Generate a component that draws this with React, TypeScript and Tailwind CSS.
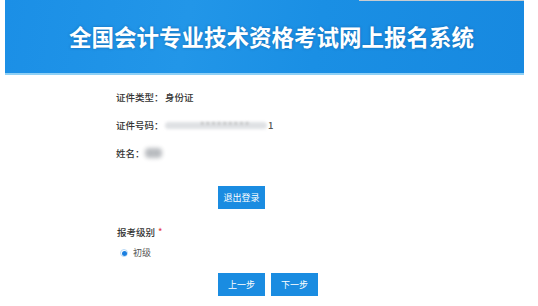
export default function App() {
  return (
    <div
      className="relative w-[538px] h-[306px] bg-white overflow-hidden"
      style={{ fontFamily: '"Noto Sans CJK SC", "Noto Sans", sans-serif' }}
    >
      {/* top strip */}
      <div className="absolute top-0 left-[359px] w-[165px] h-px bg-[#c8ccd0]" />

      {/* header */}
      <div className="ml-[5px] w-[519px] h-[75px] border-b-2 border-[#8fd0f5] bg-[linear-gradient(100deg,#1b8fe6_0%,#2296e8_35%,#1a8fe4_60%,#1789e0_100%)] flex items-center justify-center">
        <h1 className="pl-[14px] text-white text-[22.5px] leading-none font-bold [text-shadow:0_0_3px_rgba(0,40,90,0.35)]">
          全国会计专业技术资格考试网上报名系统
        </h1>
      </div>

      {/* info rows */}
      <div className="pl-[116px] pt-[16px] flex flex-col gap-[16px] text-[9.5px] leading-[12px] text-[#333] font-medium whitespace-nowrap">
        <div className="flex items-center">
          <span className="w-[49px] shrink-0">证件类型：</span>
          <span>身份证</span>
        </div>
        <div className="flex items-center">
          <span className="w-[49px] shrink-0">证件号码：</span>
          <span className="relative flex items-center">
            <span className="w-[102px] h-[7px] rounded-full bg-[#dfe1e4] blur-[1.5px]" />
            <span className="absolute left-[35px] text-[#bbb] tracking-[1px] blur-[0.8px]">
              *********
            </span>
            <span className="ml-[1px] text-[#555]">1</span>
          </span>
        </div>
        <div className="flex items-center">
          <span className="w-[29px] shrink-0">姓名：</span>
          <span className="w-[17px] h-[10px] rounded-sm bg-[#b9bcc0] blur-[2px]" />
        </div>
      </div>

      {/* logout */}
      <div className="pl-[218px] pt-[23px]">
        <button className="w-[47px] h-[23px] bg-[#1a8ce1] text-white text-[9px] leading-none whitespace-nowrap">
          退出登录
        </button>
      </div>

      {/* level */}
      <div className="pl-[117px] pt-[17px] text-[9.5px] leading-[12px] text-[#333] font-medium whitespace-nowrap">
        <div className="flex items-start">
          <span>报考级别</span>
          <span className="ml-[3px] text-[#e5414f] text-[9px]">*</span>
        </div>
        <div className="mt-[9px] flex items-center pl-[3px]">
          <span className="w-[8px] h-[8px] rounded-full border border-[#b9d9f6] flex items-center justify-center">
            <span className="w-[5px] h-[5px] rounded-full bg-[#1a7fe0]" />
          </span>
          <span className="ml-[5px] text-[9px] text-[#555] font-normal">初级</span>
        </div>
      </div>

      {/* steps */}
      <div className="pl-[218px] pt-[14px] flex gap-[6px]">
        <button className="w-[47px] h-[23px] bg-[#1a8ce1] text-white text-[9px] leading-none whitespace-nowrap">
          上一步
        </button>
        <button className="w-[47px] h-[23px] bg-[#1a8ce1] text-white text-[9px] leading-none whitespace-nowrap">
          下一步
        </button>
      </div>
    </div>
  );
}
